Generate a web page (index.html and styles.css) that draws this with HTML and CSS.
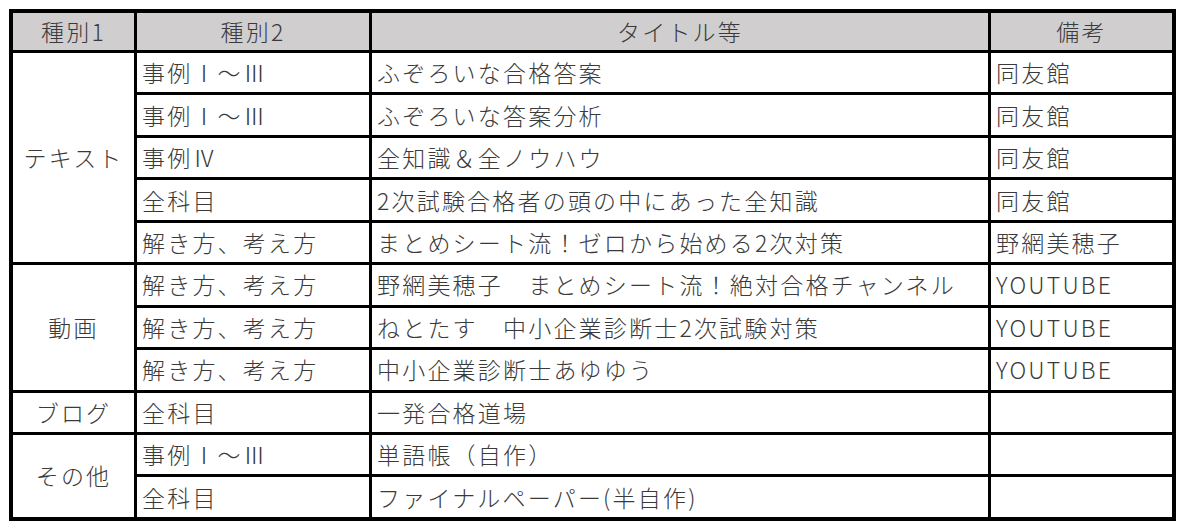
FILE: index.html
```html
<!DOCTYPE html>
<html lang="ja">
<head>
<meta charset="utf-8">
<title>参考書一覧</title>
<link rel="stylesheet" href="styles.css">
</head>
<body>
<div class="sheet">
  <div class="cell head">種別1</div>
  <div class="cell head">種別2</div>
  <div class="cell head">タイトル等</div>
  <div class="cell head">備考</div>

  <div class="cell group span5">テキスト</div>
  <div class="cell">事例Ⅰ～Ⅲ</div>
  <div class="cell">ふぞろいな合格答案</div>
  <div class="cell">同友館</div>
  <div class="cell">事例Ⅰ～Ⅲ</div>
  <div class="cell">ふぞろいな答案分析</div>
  <div class="cell">同友館</div>
  <div class="cell">事例Ⅳ</div>
  <div class="cell">全知識＆全ノウハウ</div>
  <div class="cell">同友館</div>
  <div class="cell">全科目</div>
  <div class="cell">2次試験合格者の頭の中にあった全知識</div>
  <div class="cell">同友館</div>
  <div class="cell">解き方、考え方</div>
  <div class="cell">まとめシート流！ゼロから始める2次対策</div>
  <div class="cell">野網美穂子</div>

  <div class="cell group span3">動画</div>
  <div class="cell">解き方、考え方</div>
  <div class="cell">野網美穂子　まとめシート流！絶対合格チャンネル</div>
  <div class="cell">YOUTUBE</div>
  <div class="cell">解き方、考え方</div>
  <div class="cell">ねとたす　中小企業診断士2次試験対策</div>
  <div class="cell">YOUTUBE</div>
  <div class="cell">解き方、考え方</div>
  <div class="cell">中小企業診断士あゆゆう</div>
  <div class="cell">YOUTUBE</div>

  <div class="cell group">ブログ</div>
  <div class="cell">全科目</div>
  <div class="cell">一発合格道場</div>
  <div class="cell"></div>

  <div class="cell group span2">その他</div>
  <div class="cell">事例Ⅰ～Ⅲ</div>
  <div class="cell">単語帳（自作）</div>
  <div class="cell"></div>
  <div class="cell">全科目</div>
  <div class="cell">ファイナルペーパー(半自作)</div>
  <div class="cell"></div>
</div>
</body>
</html>
```
FILE: styles.css
```css
html, body {
  margin: 0;
  padding: 0;
  background: #ffffff;
}

body {
  font-family: "Noto Sans CJK JP", "Noto Sans", sans-serif;
  font-weight: 300;
  color: #3a3a3a;
}

.sheet {
  margin: 9px 0 0 9px;
  width: 1159px;
  display: grid;
  grid-template-columns: 121px 232px 616px 181px;
  grid-template-rows: 37px repeat(11, 39.45px);
  gap: 3px;
  border: 4px solid #000000;
  background: #000000;
}

.cell {
  background: #ffffff;
  display: flex;
  align-items: center;
  padding: 0 0 0 5px;
  font-size: 23px;
  letter-spacing: 2.2px;
  line-height: 1;
  white-space: nowrap;
  overflow: hidden;
}

.head {
  background: #d0cece;
  justify-content: center;
  padding: 0;
}

.group {
  justify-content: center;
  padding: 0;
}

.span5 { grid-row: span 5; }
.span3 { grid-row: span 3; }
.span2 { grid-row: span 2; }
```
